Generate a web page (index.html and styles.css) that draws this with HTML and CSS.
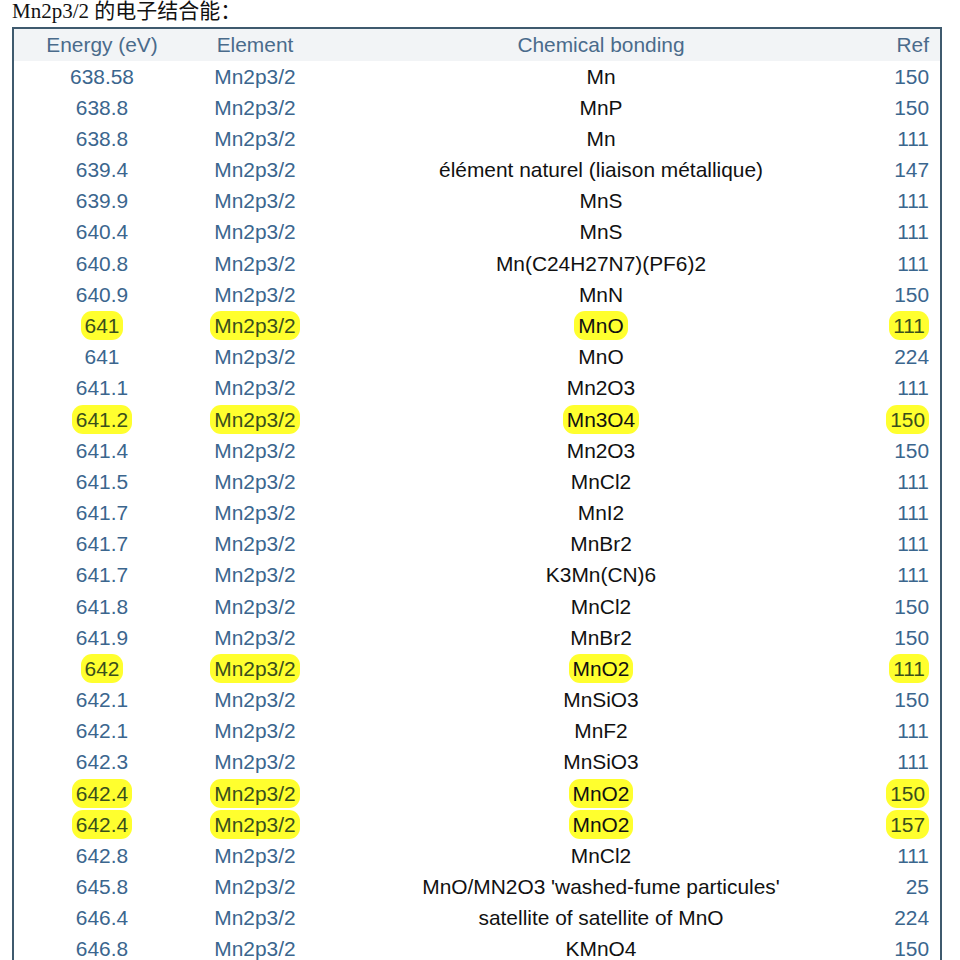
FILE: index.html
```html
<!DOCTYPE html>
<html>
<head>
<meta charset="utf-8">
<link rel="stylesheet" href="styles.css">
</head>
<body>
<div class="title">Mn2p3/2 的电子结合能：</div>
<div class="table">
  <div class="row head"><div class="c1">Energy (eV)</div><div class="c2">Element</div><div class="c3">Chemical bonding</div><div class="c4">Ref</div></div>
  <div class="row"><div class="c1">638.58</div><div class="c2">Mn2p3/2</div><div class="c3">Mn</div><div class="c4">150</div></div>
  <div class="row"><div class="c1">638.8</div><div class="c2">Mn2p3/2</div><div class="c3">MnP</div><div class="c4">150</div></div>
  <div class="row"><div class="c1">638.8</div><div class="c2">Mn2p3/2</div><div class="c3">Mn</div><div class="c4">111</div></div>
  <div class="row"><div class="c1">639.4</div><div class="c2">Mn2p3/2</div><div class="c3">élément naturel (liaison métallique)</div><div class="c4">147</div></div>
  <div class="row"><div class="c1">639.9</div><div class="c2">Mn2p3/2</div><div class="c3">MnS</div><div class="c4">111</div></div>
  <div class="row"><div class="c1">640.4</div><div class="c2">Mn2p3/2</div><div class="c3">MnS</div><div class="c4">111</div></div>
  <div class="row"><div class="c1">640.8</div><div class="c2">Mn2p3/2</div><div class="c3">Mn(C24H27N7)(PF6)2</div><div class="c4">111</div></div>
  <div class="row"><div class="c1">640.9</div><div class="c2">Mn2p3/2</div><div class="c3">MnN</div><div class="c4">150</div></div>
  <div class="row hl"><div class="c1"><span>641</span></div><div class="c2"><span>Mn2p3/2</span></div><div class="c3"><span>MnO</span></div><div class="c4"><span>111</span></div></div>
  <div class="row"><div class="c1">641</div><div class="c2">Mn2p3/2</div><div class="c3">MnO</div><div class="c4">224</div></div>
  <div class="row"><div class="c1">641.1</div><div class="c2">Mn2p3/2</div><div class="c3">Mn2O3</div><div class="c4">111</div></div>
  <div class="row hl"><div class="c1"><span>641.2</span></div><div class="c2"><span>Mn2p3/2</span></div><div class="c3"><span>Mn3O4</span></div><div class="c4"><span>150</span></div></div>
  <div class="row"><div class="c1">641.4</div><div class="c2">Mn2p3/2</div><div class="c3">Mn2O3</div><div class="c4">150</div></div>
  <div class="row"><div class="c1">641.5</div><div class="c2">Mn2p3/2</div><div class="c3">MnCl2</div><div class="c4">111</div></div>
  <div class="row"><div class="c1">641.7</div><div class="c2">Mn2p3/2</div><div class="c3">MnI2</div><div class="c4">111</div></div>
  <div class="row"><div class="c1">641.7</div><div class="c2">Mn2p3/2</div><div class="c3">MnBr2</div><div class="c4">111</div></div>
  <div class="row"><div class="c1">641.7</div><div class="c2">Mn2p3/2</div><div class="c3">K3Mn(CN)6</div><div class="c4">111</div></div>
  <div class="row"><div class="c1">641.8</div><div class="c2">Mn2p3/2</div><div class="c3">MnCl2</div><div class="c4">150</div></div>
  <div class="row"><div class="c1">641.9</div><div class="c2">Mn2p3/2</div><div class="c3">MnBr2</div><div class="c4">150</div></div>
  <div class="row hl"><div class="c1"><span>642</span></div><div class="c2"><span>Mn2p3/2</span></div><div class="c3"><span>MnO2</span></div><div class="c4"><span>111</span></div></div>
  <div class="row"><div class="c1">642.1</div><div class="c2">Mn2p3/2</div><div class="c3">MnSiO3</div><div class="c4">150</div></div>
  <div class="row"><div class="c1">642.1</div><div class="c2">Mn2p3/2</div><div class="c3">MnF2</div><div class="c4">111</div></div>
  <div class="row"><div class="c1">642.3</div><div class="c2">Mn2p3/2</div><div class="c3">MnSiO3</div><div class="c4">111</div></div>
  <div class="row hl"><div class="c1"><span>642.4</span></div><div class="c2"><span>Mn2p3/2</span></div><div class="c3"><span>MnO2</span></div><div class="c4"><span>150</span></div></div>
  <div class="row hl"><div class="c1"><span>642.4</span></div><div class="c2"><span>Mn2p3/2</span></div><div class="c3"><span>MnO2</span></div><div class="c4"><span>157</span></div></div>
  <div class="row"><div class="c1">642.8</div><div class="c2">Mn2p3/2</div><div class="c3">MnCl2</div><div class="c4">111</div></div>
  <div class="row"><div class="c1">645.8</div><div class="c2">Mn2p3/2</div><div class="c3">MnO/MN2O3 'washed-fume particules'</div><div class="c4">25</div></div>
  <div class="row"><div class="c1">646.4</div><div class="c2">Mn2p3/2</div><div class="c3">satellite of satellite of MnO</div><div class="c4">224</div></div>
  <div class="row"><div class="c1">646.8</div><div class="c2">Mn2p3/2</div><div class="c3">KMnO4</div><div class="c4">150</div></div>
</div>
</body>
</html>
```
FILE: styles.css
```css
html, body {
  margin: 0;
  padding: 0;
  background: #ffffff;
}
body {
  overflow: hidden;
}
.title {
  font-family: "Liberation Serif", "Noto Sans CJK SC", serif;
  font-size: 21px;
  line-height: 22px;
  color: #111111;
  padding-left: 12px;
  margin-bottom: 5px;
  white-space: nowrap;
}
.table {
  margin-left: 12px;
  width: 926px;
  border: 2px solid #3f5a6e;
  font-family: "Liberation Sans", Arial, sans-serif;
  font-size: 20.9px;
}
.row {
  display: grid;
  grid-template-columns: 176px 130px 562px 58px;
  height: 31.18px;
  align-items: center;
  color: #3b668e;
}
.row.head {
  height: 32px;
  background: #f2f4f6;
  color: #4a6b8b;
}
.c1, .c2, .c3 {
  text-align: center;
  white-space: nowrap;
}
.c3 {
  color: #111111;
}
.head .c3 {
  color: #4a6b8b;
}
.c4 {
  text-align: right;
  padding-right: 11px;
}
.hl span {
  display: inline-block;
  background: #ffff2e;
  border-radius: 11px;
  padding: 0 4px;
  line-height: 29px;
  color: #3a4f1c;
}
.hl .c3 span {
  color: #111111;
}
```
